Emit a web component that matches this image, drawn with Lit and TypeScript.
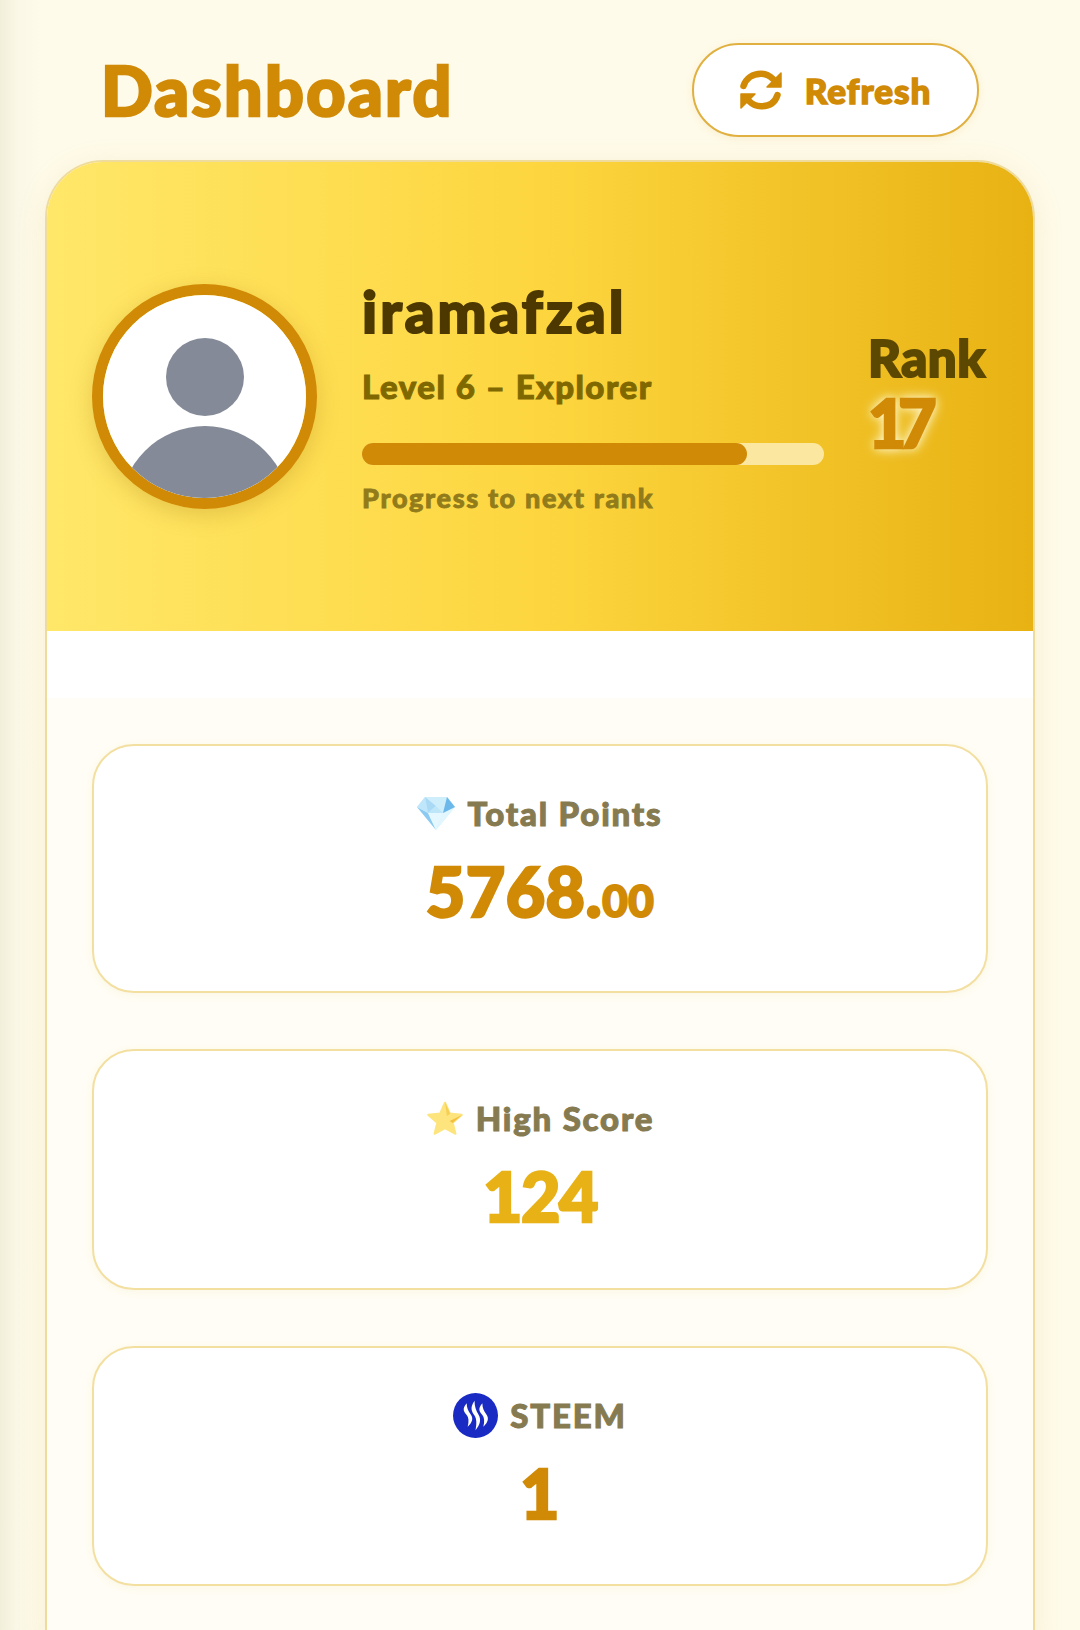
import { css, html, LitElement } from "lit";
import { customElement } from "lit/decorators.js";

@customElement("app-root")
export class AppRoot extends LitElement {
    diamond() {
        return html`<svg class="emoji" viewBox="0 0 38 34">
            <path fill="#cfeefc" d="M8 1h22l8 10-19 23L0 11z"/>
            <path fill="#8ccaf1" d="M0 11l19 23-8-17z"/>
            <path fill="#bfe6fa" d="M8 1L0 11l11 6z"/>
            <path fill="#e6f8ff" d="M11 17h15l-7 17z"/>
            <path fill="#e2f6fe" d="M26 17l12-6-19 23z"/>
            <path fill="#6cb8ea" d="M30 1l8 10-12 6z"/>
            <path fill="#a9d9f5" d="M8 1l3 16 8-7z"/>
            <path fill="#bde6f9" d="M19 10l7 7H11z"/>
        </svg>`;
    }

    star() {
        return html`<svg class="emoji" viewBox="0 0 38 36">
            <path fill="#fde47c" stroke="#fde47c" stroke-width="2.500" stroke-linejoin="round"
                d="M19 2l5 11.500 12.500 1.200-9.500 8.300 2.800 11.500L19 28.500 8.200 34.500 11 23 1.500 14.700 14 13.500z"/>
            <path fill="#f7cf55" d="M19 1l5.500 12.500L21 16z"/>
            <path fill="#f3bf3c" d="M37 14.800l-10 8.500-3-2z"/>
        </svg>`;
    }

    steem() {
        return html`<svg class="emoji steem" viewBox="0 0 46 46">
            <circle cx="23" cy="23" r="23" fill="#1a2bc4"/>
            <g fill="#fff">
                <path d="M22 8C17 15 19 19 22 23C24 26 24.500 31 23 38C28 32 29 27 26 22C23.500 18 22 14 22 8z"/>
                <path transform="translate(-8 4) scale(1 .8)" d="M22 8C17 15 19 19 22 23C24 26 24.500 31 23 38C28 32 29 27 26 22C23.500 18 22 14 22 8z"/>
                <path transform="translate(8 4) scale(1 .8)" d="M22 8C17 15 19 19 22 23C24 26 24.500 31 23 38C28 32 29 27 26 22C23.500 18 22 14 22 8z"/>
            </g>
        </svg>`;
    }

    render() {
        return html`
            <header class="top">
                <h1>Dashboard</h1>
                <button class="refresh">
                    <svg viewBox="0 0 42 40">
                        <g fill="none" stroke="currentColor" stroke-width="6.500" stroke-linecap="round">
                            <path d="M3.500 16C6 8 13 3.700 21 3.700C26 3.700 30 6 33 9"/>
                            <path d="M37.500 25C35 33 29 36.300 21 36.300C16 36.300 12 34 9 31"/>
                        </g>
                        <g fill="currentColor" stroke="currentColor" stroke-width="1.500" stroke-linejoin="round">
                            <path d="M41 3v14H27z"/>
                            <path d="M1 24h14L1 38z"/>
                        </g>
                    </svg>
                    Refresh
                </button>
            </header>
            <section class="panel">
                <div class="hero">
                    <div class="avatar">
                        <svg viewBox="0 0 203 203">
                            <rect width="203" height="203" fill="#fff"/>
                            <circle cx="102" cy="82" r="39" fill="#848a97"/>
                            <circle cx="102" cy="216" r="85" fill="#848a97"/>
                        </svg>
                    </div>
                    <div class="info">
                        <div class="name">iramafzal</div>
                        <div class="level">Level 6 – Explorer</div>
                        <div class="track"><div class="fill"></div></div>
                        <div class="hint">Progress to next rank</div>
                    </div>
                    <div class="rank">
                        <div class="rank-label">Rank</div>
                        <div class="rank-value">17</div>
                    </div>
                </div>
                <div class="stats">
                    <div class="stat tall">
                        <div class="label">${this.diamond()}Total Points</div>
                        <div class="value">5768.<small>00</small></div>
                    </div>
                    <div class="stat mid">
                        <div class="label">${this.star()}High Score</div>
                        <div class="value gold">124</div>
                    </div>
                    <div class="stat">
                        <div class="label">${this.steem()}STEEM</div>
                        <div class="value">1</div>
                    </div>
                </div>
            </section>
        `;
    }

    static styles = css`
      :host {
        display: block;
        height: 1630px;
        overflow: hidden;
        background: linear-gradient(90deg, #f1eeda 0, #faf7e6 16px, #fffbea 42px);
        font-family: Lato, "Noto Sans", sans-serif;
        font-weight: 900;
      }

      .top {
        display: flex;
        justify-content: space-between;
        align-items: center;
        height: 94px;
        padding: 43px 101px 23px 101px;
      }

      h1 {
        margin: 0 0 2px;
        font-size: 68px;
        font-weight: 900;
        letter-spacing: 2.400px;
        color: #d18a06;
        -webkit-text-stroke: 2.500px #d18a06;
      }

      .refresh {
        display: flex;
        align-items: center;
        justify-content: center;
        gap: 23px;
        width: 287px;
        height: 94px;
        box-sizing: border-box;
        padding: 0;
        border: 2px solid #e0b040;
        border-radius: 47px;
        background: #fff;
        color: #d18a06;
        font: inherit;
        font-size: 35px;
        letter-spacing: 1px;
        -webkit-text-stroke: 1.500px #d18a06;
        box-shadow: 0 2px 8px rgba(209, 160, 40, 0.12);
      }

      .refresh svg {
        width: 42px;
        height: 40px;
      }

      .panel {
        margin: 0 45px;
        border: 2px solid #efdc9c;
        border-bottom: 0;
        border-radius: 58px 58px 0 0;
        background: #fff;
        overflow: hidden;
        box-shadow: 0 6px 30px rgba(190, 160, 60, 0.14);
      }

      .hero {
        display: flex;
        align-items: center;
        height: 469px;
        padding: 0 45px;
        box-sizing: border-box;
        background: linear-gradient(90deg, #ffe769 0, #fdd63f 50%, #e8b213 100%);
      }

      .avatar {
        flex: none;
        width: 225px;
        height: 225px;
        box-sizing: border-box;
        border: 11px solid #d18a06;
        border-radius: 50%;
        overflow: hidden;
        box-shadow: 0 6px 22px rgba(160, 120, 20, 0.28);
      }

      .avatar svg {
        display: block;
        width: 100%;
        height: 100%;
      }

      .info {
        flex: none;
        width: 462px;
        margin: 0 44px 0 45px;
      }

      .name {
        font-size: 58px;
        line-height: 64px;
        letter-spacing: 3.100px;
        color: #4d3800;
        -webkit-text-stroke: 2px #4d3800;
      }

      .level {
        margin-top: 22px;
        font-size: 33px;
        line-height: 42px;
        letter-spacing: 1.500px;
        color: #806800;
        -webkit-text-stroke: 1px #806800;
      }

      .track {
        margin-top: 36px;
        height: 22px;
        border-radius: 11px;
        background: #fbe7a0;
      }

      .fill {
        width: 83.300%;
        height: 100%;
        border-radius: 11px;
        background: #d18a06;
      }

      .hint {
        margin-top: 17px;
        font-size: 27px;
        line-height: 32px;
        letter-spacing: 1.650px;
        color: #917b1a;
        -webkit-text-stroke: 0.800px #917b1a;
      }

      .rank {
        flex: none;
        margin-bottom: 10px;
      }

      .rank-label {
        font-size: 51px;
        line-height: 60px;
        letter-spacing: 0.500px;
        color: #5c4800;
        -webkit-text-stroke: 2px #5c4800;
      }

      .rank-value {
        margin-top: 2px;
        font-size: 66px;
        line-height: 66px;
        letter-spacing: -8px;
        color: #d18a06;
        -webkit-text-stroke: 2.500px #d18a06;
        text-shadow: 0 0 8px #fff8d0, 0 0 14px #fff8d0;
      }

      .stats {
        display: flex;
        flex-direction: column;
        gap: 56px;
        margin-top: 67px;
        padding: 46px 45px 60px;
        background: #fffdf5;
      }

      .stat {
        display: flex;
        flex-direction: column;
        align-items: center;
        height: 240px;
        box-sizing: border-box;
        padding-top: 44px;
        border: 2px solid #f3dfa0;
        border-radius: 42px;
        background: #fff;
        box-shadow: 0 2px 8px rgba(209, 170, 50, 0.08);
      }

      .stat.tall {
        height: 249px;
      }

      .stat.mid {
        height: 241px;
      }

      .label {
        display: flex;
        align-items: center;
        gap: 12px;
        height: 46px;
        font-size: 33px;
        letter-spacing: 1.800px;
        color: #867a50;
        -webkit-text-stroke: 1px #867a50;
      }

      .emoji {
        width: 38px;
        height: 34px;
      }

      .emoji.steem {
        width: 45px;
        height: 45px;
      }

      .value {
        margin-top: 17px;
        font-size: 68px;
        line-height: 76px;
        letter-spacing: 0.500px;
        color: #d18a06;
        -webkit-text-stroke: 2.500px #d18a06;
      }

      .value small {
        font-size: 44px;
        -webkit-text-stroke: 2px #d18a06;
      }

      .value.gold {
        letter-spacing: -1.500px;
        color: #e8b217;
        -webkit-text-stroke: 2.500px #e8b217;
      }
    `;
}
